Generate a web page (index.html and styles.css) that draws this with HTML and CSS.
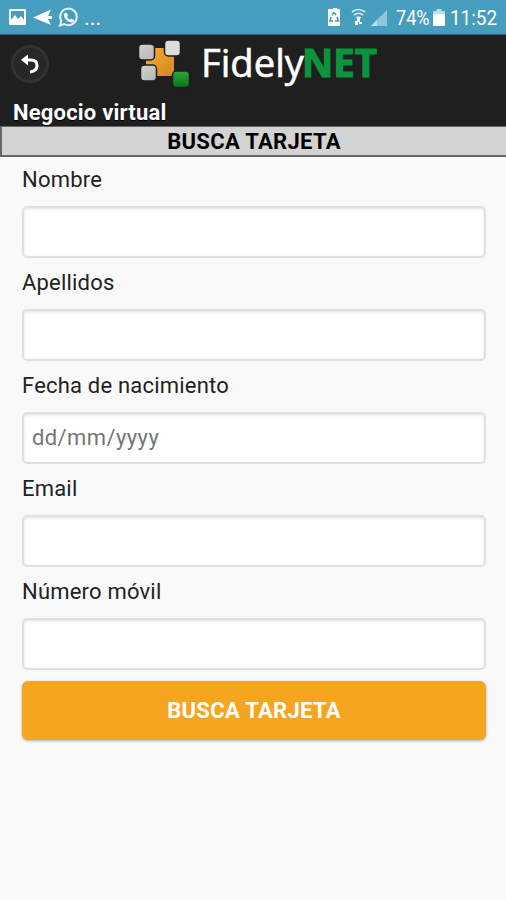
FILE: index.html
```html
<!DOCTYPE html>
<html lang="es">

<head>
    <meta charset="UTF-8">
    <meta name="viewport" content="width=device-width, initial-scale=1.0">
    <title>FidelyNET - Busca tarjeta</title>
    <link rel="stylesheet" href="styles.css">
</head>

<body>
    <div class="status-bar">
        <div class="status-left">
            <svg width="96" height="34" viewBox="0 0 96 34">
                <path fill="#fff" fill-rule="evenodd" d="M10 9h15q1 0 1 1v14q0 1-1 1H10q-1 0-1-1V10q0-1 1-1zM11 11v9l4-5 3 4 3-3 3 4v-9z" />
                <path fill="#fff" d="M33 17.500L51 9.500l-3 6.500h4v3h-4l3 6z" />
                <path fill="none" stroke="#e3f4fa" stroke-width="2" d="M60 25.500l1.300-4.500a8.300 8.300 0 1 1 3 3z" />
                <path fill="#fff" d="M64.500 13.200l2-.7 1.500 3-1 1.300q1 2 3 2.900l1.300-1.200 2.800 1.500q0 2.300-2.800 2.500-6-1.200-7.300-6.500-.2-1.600.5-2.800z" />
            </svg>
            <span class="more">...</span>
        </div>
        <div class="status-right">
            <svg width="66" height="34" viewBox="0 0 66 34">
                <path fill="#fff" d="M9 9h3V8h4v1h2q1 0 1 1v15q0 1-1 1H8q-1 0-1-1V10q0-1 1-1z" />
                <path fill="none" stroke="#479dbd" stroke-width="1.600" d="M11 15l2-2.500 2 2.500M10 17l-1 4h3M16 17l1.500 4H14" />
                <path fill="none" stroke="#d5edf5" stroke-width="1.600" d="M31 12q6.500-5 13 0M33 15q4.500-3.500 9 0M35 18q2.500-2 5 0" />
                <path fill="#fff" d="M36 18h3v4h-3zM34 21h3v4h-3zM38 22h3v2h-3z" />
                <path fill="#8fc8db" d="M67 9v17H50z" />
                <path fill="#b8e0ed" d="M56 20v6h-6z" />
            </svg>
            <span class="battery-level">74%</span>
            <svg width="12" height="34" viewBox="0 0 12 34">
                <path fill="#b9dfeb" d="M3.500 9h5v2H11q1 0 1 1v3H0v-3q0-1 1-1h2.500z" />
                <path fill="#fff" d="M0 14h12v11q0 1-1 1H1q-1 0-1-1z" />
            </svg>
            <span class="clock">11:52</span>
        </div>
    </div>

    <header class="header">
        <div class="brand-row">
            <button class="back-btn" type="button" aria-label="Volver">
                <svg width="20" height="22" viewBox="0 0 20 22">
                    <path fill="none" stroke="#fff" stroke-width="3" d="M6 7h5q6 0 6 5.500 0 5.500-7 6.500" />
                    <path fill="#fff" d="M1 6.800L8 1.500v11z" />
                </svg>
            </button>
            <svg class="logo" width="250" height="60" viewBox="0 0 250 60">
                <defs>
                    <linearGradient id="silver" x2="1" y2="1">
                        <stop offset="0" stop-color="#d2d2d2" />
                        <stop offset="1" stop-color="#b5b5b5" />
                    </linearGradient>
                    <linearGradient id="orange" x2="1" y2="1">
                        <stop offset="0" stop-color="#f5aa3c" />
                        <stop offset="1" stop-color="#d5871d" />
                    </linearGradient>
                    <linearGradient id="green" x2="0" y2="1">
                        <stop offset="0" stop-color="#2cab3b" />
                        <stop offset="1" stop-color="#08731b" />
                    </linearGradient>
                </defs>
                <rect x="16" y="12" width="28" height="28" rx="4" fill="url(#orange)" />
                <g stroke="#1f1f1f" stroke-width="1.500">
                    <rect x="8.500" y="8" width="16" height="16" rx="4" fill="url(#silver)" />
                    <rect x="34.500" y="4" width="16" height="16" rx="4" fill="#dcdcdc" />
                    <rect x="10.500" y="29" width="16" height="16" rx="4" fill="url(#silver)" />
                    <rect x="42.500" y="35" width="17" height="16.500" rx="4" fill="url(#green)" />
                </g>
                <text class="logo-name" x="71" y="40.500" textLength="103" lengthAdjust="spacingAndGlyphs">Fidely</text>
                <text class="logo-net" x="172" y="40.500" textLength="75" lengthAdjust="spacingAndGlyphs">NET</text>
            </svg>
        </div>
        <div class="shop-name">Negocio virtual</div>
    </header>

    <h1 class="page-title">BUSCA TARJETA</h1>

    <form class="search-form">
        <label for="nombre">Nombre</label>
        <input id="nombre" type="text">
        <label for="apellidos">Apellidos</label>
        <input id="apellidos" type="text">
        <label for="fecha">Fecha de nacimiento</label>
        <input id="fecha" type="text" placeholder="dd/mm/yyyy">
        <label for="email">Email</label>
        <input id="email" type="email">
        <label for="movil">Número móvil</label>
        <input id="movil" type="tel">
        <button class="submit-btn" type="button">BUSCA TARJETA</button>
    </form>
</body>

</html>
```
FILE: styles.css
```css
* {
    box-sizing: border-box;
    margin: 0;
    padding: 0;
}

body {
    min-height: 100vh;
    background: #f9f9f9;
    color: #222;
    font-family: Roboto, "Liberation Sans", sans-serif;
    font-size: 22px;
}

svg {
    display: block;
    flex: none;
}

.status-bar {
    display: flex;
    justify-content: space-between;
    height: 35px;
    padding-right: 9px;
    border-bottom: 1px solid #286078;
    background: #479dbd;
    color: #fff;
    line-height: 36px;
}

.status-left,
.status-right {
    display: flex;
}

.status-left .more {
    margin-left: -12px;
}

.battery-level {
    width: 36px;
    margin: 0 1px 0 9px;
    font-size: 21px;
    transform: scaleX(0.86);
    transform-origin: left;
}

.clock {
    width: 47px;
    margin-left: 5px;
    font-size: 21px;
    white-space: nowrap;
    transform: scaleX(0.9);
    transform-origin: left;
}

.header {
    height: 91px;
    background: #1f1f1f;
    color: #fff;
}

.brand-row {
    display: flex;
    height: 61px;
    padding: 1px 0 0 11px;
}

.back-btn {
    display: flex;
    align-items: center;
    justify-content: center;
    width: 38px;
    height: 38px;
    margin: 9px 81px 0 0;
    border: 3px solid #323232;
    border-radius: 50%;
    background: #272727;
}

.logo {
    overflow: visible;
}

.logo text {
    font-family: "Open Sans", "Noto Sans", sans-serif;
    font-size: 39px;
}

.logo .logo-name {
    fill: #fff;
    stroke: #fff;
    stroke-width: 0.6px;
}

.logo .logo-net {
    fill: #0a943d;
    stroke: #0a943d;
    stroke-width: 1.2px;
    font-weight: 700;
}

.shop-name {
    padding-left: 13px;
    font-weight: 700;
    line-height: 33px;
    letter-spacing: 0.2px;
    text-shadow: 0 1px 1px #000;
}

.page-title {
    height: 31px;
    border: 1px solid #666;
    border-width: 1px 0 2px 2px;
    background: #d3d3d3;
    color: #000;
    font-size: 22px;
    font-weight: 700;
    line-height: 29px;
    letter-spacing: 0.3px;
    text-align: center;
}

.search-form {
    display: flex;
    flex-direction: column;
    padding: 10px 20px 0 22px;
}

.search-form label {
    margin-bottom: 13px;
    font-size: 22px;
    line-height: 26px;
    letter-spacing: 0.2px;
}

.search-form input {
    height: 52px;
    margin-bottom: 12px;
    padding: 0 8px 2px;
    border: 2px solid #e0e0e0;
    border-radius: 5px;
    background: #fff;
    box-shadow: inset 0 1px 3px rgba(0, 0, 0, 0.12);
    color: #333;
    font: inherit;
    letter-spacing: 0.4px;
}

.search-form input::placeholder {
    color: #757575;
}

.submit-btn {
    height: 59px;
    margin-top: -1px;
    border: 0;
    border-radius: 6px;
    background: #f6a51f;
    box-shadow: 0 1px 3px rgba(0, 0, 0, 0.3);
    color: #fff;
    font: inherit;
    font-weight: 700;
    letter-spacing: 0.3px;
}
```
